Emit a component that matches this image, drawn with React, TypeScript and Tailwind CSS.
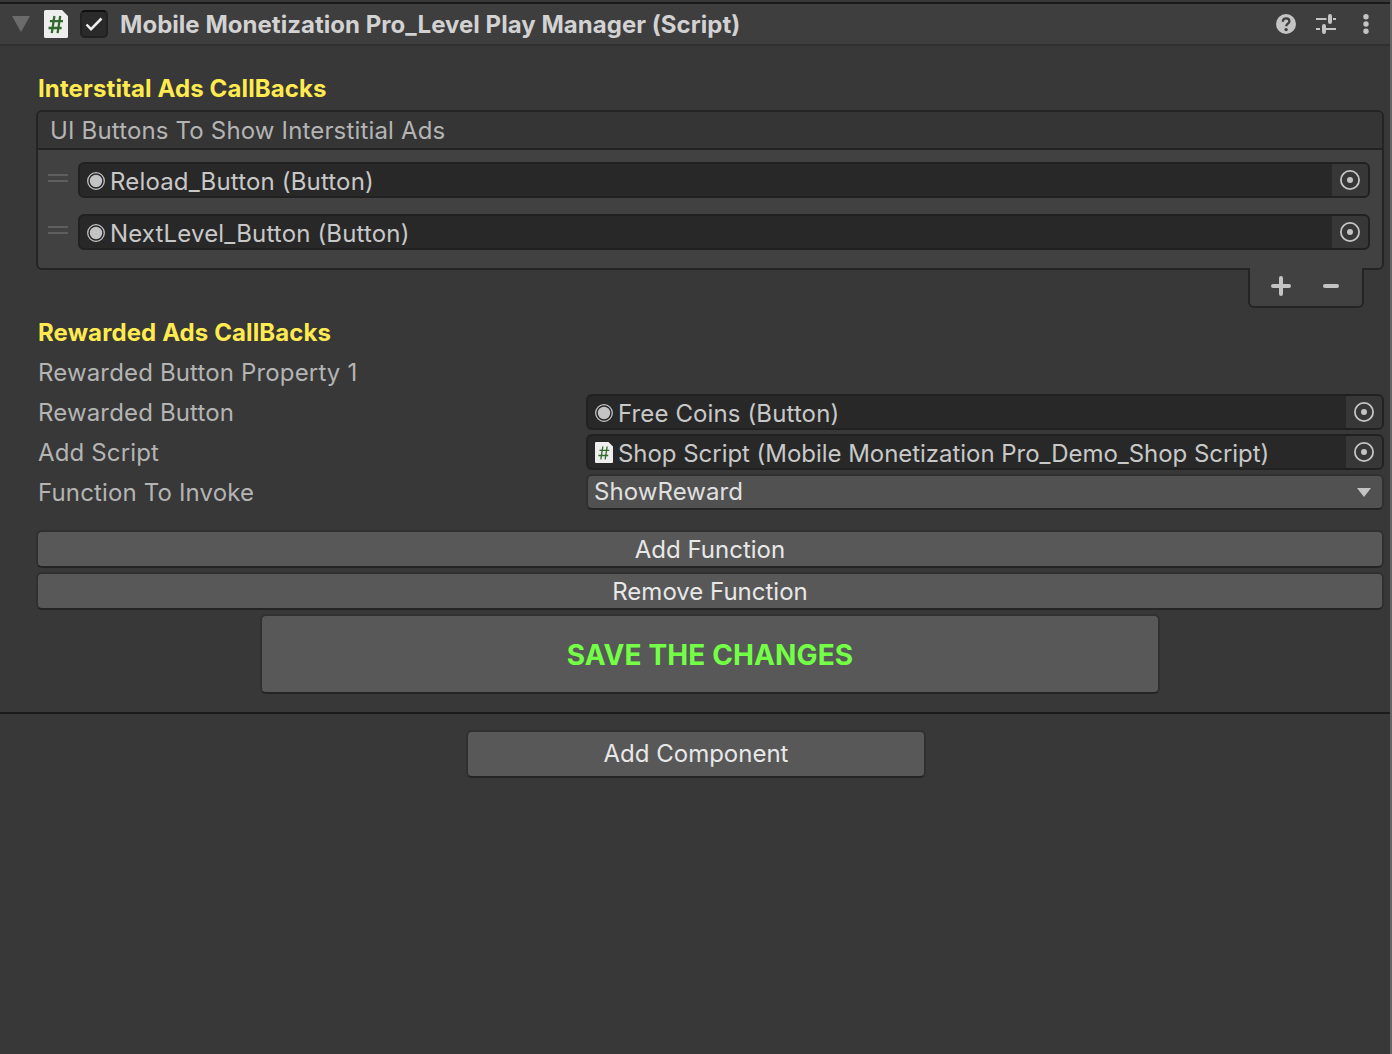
import type { ReactNode } from "react";

function ScriptIcon({ className, stroke = 2.3 }: { className: string; stroke?: number }) {
  return (
    <svg className={className} viewBox="0 0 24 28" preserveAspectRatio="none">
      <path d="M1.5 0H18l6 6v20.5a1.5 1.5 0 0 1-1.5 1.5h-21A1.5 1.5 0 0 1 0 26.5V1.5A1.5 1.5 0 0 1 1.5 0Z" fill="#eeeeee" />
      <path d="M10.4 6 7.8 23.2M16.2 6l-2.6 17.2M5.900 11.200h13.100M4.500 18h13.100" stroke="#32692c" strokeWidth={stroke} fill="none" />
    </svg>
  );
}

function ButtonIcon() {
  return (
    <svg className="mt-px h-[18px] w-[18px] shrink-0" viewBox="0 0 18 18">
      <circle cx="9" cy="9" r="8.300" fill="none" stroke="#c4c4c4" strokeWidth="1.300" />
      <circle cx="9" cy="9" r="6.200" fill="#c4c4c4" />
    </svg>
  );
}

function ObjectField({ icon, children, className = "" }: { icon: ReactNode; children: ReactNode; className?: string }) {
  return (
    <div className={`flex h-9 items-stretch overflow-hidden rounded-[6px] border-2 border-[#212121] bg-[#282828] ${className}`}>
      <div className="flex min-w-0 flex-1 items-center pl-[7px]">
        {icon}
        <span className="ml-[5px] mt-[4px] whitespace-nowrap leading-[32px] text-[#c8c8c8]">{children}</span>
      </div>
      <div className="flex w-9 items-center justify-center bg-[#373737]">
        <svg className="h-5 w-5" viewBox="0 0 20 20">
          <circle cx="10" cy="10" r="9.100" fill="none" stroke="#c4c4c4" strokeWidth="1.800" />
          <circle cx="10" cy="10" r="3" fill="#c4c4c4" />
        </svg>
      </div>
    </div>
  );
}

function ListRow({ children }: { children: ReactNode }) {
  return (
    <div className="flex h-9 items-start pl-[10px] pr-3">
      <div className="mr-[10px] mt-3 h-2 w-5 shrink-0 border-y-2 border-[#5e5e5e]" />
      <ObjectField icon={<ButtonIcon />} className="flex-1">{children}</ObjectField>
    </div>
  );
}

function PropertyRow({ label, children }: { label: string; children?: ReactNode }) {
  return (
    <div className="flex h-10 items-center">
      <div className="w-[548px] pl-[2px] pt-[2px] leading-[40px] tracking-[0.150px] text-[#b4b4b4]">{label}</div>
      {children}
    </div>
  );
}

function PushButton({ className, children }: { className: string; children: ReactNode }) {
  return (
    <button className={`flex items-center justify-center rounded-[6px] border-2 border-[#303030] border-b-[#242424] bg-[#585858] text-[#e8e8e8] ${className}`}>
      {children}
    </button>
  );
}

export default function App() {
  return (
    <div className="flex h-[1054px] w-[1392px] overflow-hidden bg-[#383838] font-['Inter',sans-serif] text-2xl">
      <div className="flex w-[1390px] shrink-0 flex-col">
        <header className="mt-[2px] flex h-11 shrink-0 items-center border-b-2 border-t-2 border-b-[#303030] border-t-[#1a1a1a] bg-[#3e3e3e] pl-3">
          <svg className="h-4 w-[18px]" viewBox="0 0 18 16">
            <path d="M0 0h18L9 16Z" fill="#6b6b6b" />
          </svg>
          <ScriptIcon className="ml-[14px] h-7 w-6" />
          <div className="ml-3 flex h-7 w-7 items-center justify-center rounded-[5px] border-2 border-[#212121] border-t-[#0f0f0f] bg-[#2a2a2a]">
            <svg className="h-6 w-6 shrink-0" viewBox="0 0 24 24">
              <path d="m4.500 12.500 4.500 4.700L19.500 6.500" fill="none" stroke="#eeeeee" strokeWidth="2.500" />
            </svg>
          </div>
          <h1 className="ml-3 mt-[2px] whitespace-nowrap font-bold leading-[40px] tracking-[0.030px] text-[#d2d2d2]">
            Mobile Monetization Pro_Level Play Manager (Script)
          </h1>
          <div className="ml-auto mr-[21px] flex items-center">
            <svg className="h-5 w-5" viewBox="0 0 20 20">
              <circle cx="10" cy="10" r="10" fill="#c4c4c4" />
              <path d="M6.800 7.700C6.800 5.600 8.100 4.300 10.100 4.300c1.900 0 3.300 1.100 3.300 2.900 0 2.400-3.200 2.600-3.200 5.100" fill="none" stroke="#3e3e3e" strokeWidth="2.300" />
              <circle cx="10.100" cy="15.600" r="1.700" fill="#3e3e3e" />
            </svg>
            <svg className="ml-5 h-5 w-5" viewBox="0 0 20 20">
              <path d="M0 5h10.500M17 5h3M0 15h4M10 15h10" stroke="#c4c4c4" strokeWidth="2" />
              <path d="M14 2v6M8 12v6" stroke="#c4c4c4" strokeWidth="4" strokeLinecap="round" />
            </svg>
            <svg className="ml-[27px] h-5 w-[6px]" viewBox="0 0 6 20">
              <circle cx="3" cy="2.700" r="2.700" fill="#c4c4c4" />
              <circle cx="3" cy="10" r="2.700" fill="#c4c4c4" />
              <circle cx="3" cy="17.300" r="2.700" fill="#c4c4c4" />
            </svg>
          </div>
        </header>

        <main className="flex h-[666px] shrink-0 flex-col pl-9 pr-[6px] pt-[23px]">
          <h2 className="pl-[2px] text-2xl font-bold leading-[40px] tracking-[0.120px] text-[#ffeb4f]">Interstital Ads CallBacks</h2>
          <section className="mt-px flex h-[160px] shrink-0 flex-col rounded-[6px] border-2 border-[#242424] bg-[#414141]">
            <div className="h-[38px] rounded-t-[4px] border-b-2 border-[#242424] bg-[#353535] pl-3 leading-[38px] tracking-[0.160px] text-[#b4b4b4]">
              UI Buttons To Show Interstitial Ads
            </div>
            <div className="flex flex-col gap-4 pt-3 tracking-[0.160px]">
              <ListRow>Reload_Button (Button)</ListRow>
              <ListRow>NextLevel_Button (Button)</ListRow>
            </div>
          </section>
          <div className="relative -mt-[2px] mr-5 flex h-10 w-[116px] shrink-0 items-center self-end rounded-b-[6px] border-2 border-t-0 border-[#242424] bg-[#414141] pb-[2px]">
            <svg className="ml-[21px] h-5 w-5" viewBox="0 0 20 20">
              <path d="M10 2v16M2 10h16" stroke="#c4c4c4" strokeWidth="4" strokeLinecap="round" />
            </svg>
            <svg className="ml-8 h-5 w-4" viewBox="0 0 16 20">
              <path d="M2 10h12" stroke="#c4c4c4" strokeWidth="4" strokeLinecap="round" />
            </svg>
          </div>

          <h2 className="mt-[5px] -mb-px pl-[2px] text-2xl font-bold leading-[40px] tracking-[0.110px] text-[#ffeb4f]">Rewarded Ads CallBacks</h2>
          <PropertyRow label="Rewarded Button Property 1" />
          <PropertyRow label="Rewarded Button">
            <ObjectField icon={<ButtonIcon />} className="ml-[2px] flex-1 tracking-[0.120px]">Free Coins (Button)</ObjectField>
          </PropertyRow>
          <PropertyRow label="Add Script">
            <ObjectField icon={<ScriptIcon className="mt-px h-[21px] w-[18px] shrink-0" stroke={1.8} />} className="ml-[2px] flex-1 tracking-[-0.040px]">
              Shop Script (Mobile Monetization Pro_Demo_Shop Script)
            </ObjectField>
          </PropertyRow>
          <PropertyRow label="Function To Invoke">
            <div className="ml-[2px] flex h-9 flex-1 items-center rounded-[6px] border-2 border-[#303030] border-b-[#242424] bg-[#515151] pl-[6px] pr-[11px]">
              <span className="leading-[32px] tracking-[0.080px] text-[#e0e0e0]">ShowReward</span>
              <svg className="ml-auto h-[9px] w-[14px]" viewBox="0 0 14 9">
                <path d="M0 0h14L7 9Z" fill="#c4c4c4" />
              </svg>
            </div>
          </PropertyRow>

          <PushButton className="mt-[18px] h-[38px] shrink-0 pt-[2px]">Add Function</PushButton>
          <PushButton className="mt-1 h-[38px] shrink-0 pt-[2px]">Remove Function</PushButton>
          <PushButton className="mt-1 h-20 w-[900px] shrink-0 self-center pt-1">
            <span className="text-[28px] font-bold tracking-[0.120px] text-[#73ff45]">SAVE THE CHANGES</span>
          </PushButton>
        </main>

        <footer className="flex w-[1392px] justify-center border-t-2 border-[#1a1a1a] pt-4">
          <PushButton className="h-12 w-[460px]">Add Component</PushButton>
        </footer>
      </div>
      <div className="w-[2px] bg-[#666664]" />
    </div>
  );
}
